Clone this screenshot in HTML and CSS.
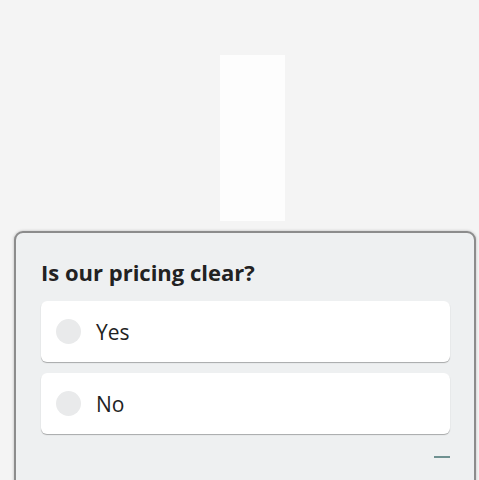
FILE: index.html
```html
<!DOCTYPE html>
<html>
<head>
<meta charset="utf-8">
<link rel="stylesheet" href="styles.css">
</head>
<body>
<div class="stage">
  <div class="ghost"></div>
</div>
<div class="card">
  <h2 class="title">Is our pricing clear?</h2>
  <div class="options">
    <label class="option"><span class="radio"></span><span class="label">Yes</span></label>
    <label class="option"><span class="radio"></span><span class="label">No</span></label>
  </div>
  <div class="footer"><span class="dash"></span></div>
</div>
</body>
</html>
```
FILE: styles.css
```css
html, body {
  margin: 0;
  padding: 0;
}
body {
  width: 479px;
  height: 480px;
  overflow: hidden;
  background: #f4f4f4;
  font-family: "Open Sans", "Liberation Sans", sans-serif;
}
.stage {
  height: 231px;
  padding-top: 55px;
  padding-left: 220px;
  box-sizing: border-box;
}
.ghost {
  width: 65px;
  height: 166px;
  background: #fdfdfd;
}
.card {
  margin-left: 14px;
  width: 462px;
  height: 270px;
  box-sizing: border-box;
  border: 2px solid #8c8c8c;
  border-radius: 9px;
  background: #eef0f1;
  box-shadow: 0 0 3px rgba(0,0,0,0.25);
  padding: 24px 24px 0 25px;
}
.title {
  margin: 0;
  font-size: 22px;
  line-height: 30px;
  font-weight: 700;
  color: #222;
}
.options {
  margin-top: 14px;
  display: flex;
  flex-direction: column;
  gap: 11px;
}
.option {
  display: flex;
  align-items: center;
  height: 61px;
  padding-left: 15px;
  background: #fff;
  border-radius: 6px;
  box-shadow: 0 1px 1px rgba(0,0,0,0.3);
}
.radio {
  width: 25px;
  height: 25px;
  border-radius: 50%;
  background: #e9eaeb;
  flex: none;
}
.label {
  margin-left: 15px;
  font-size: 21px;
  color: #222;
}
.footer {
  display: flex;
  justify-content: flex-end;
  padding-top: 22px;
}
.dash {
  width: 16px;
  height: 2px;
  background: #6f9191;
}
```
